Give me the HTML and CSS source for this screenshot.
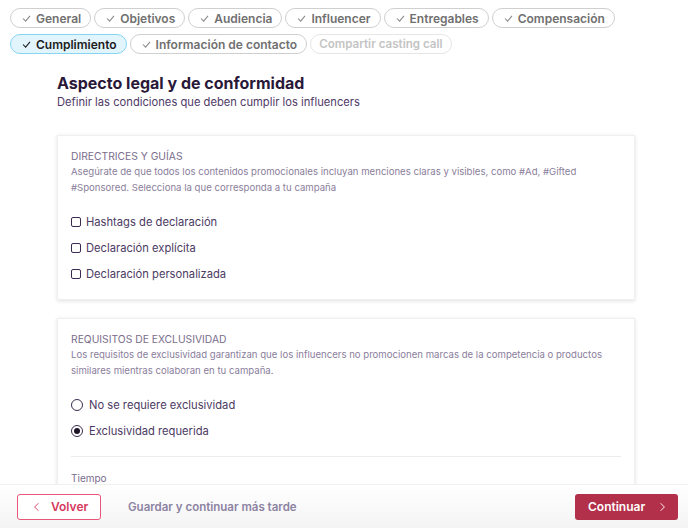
FILE: index.html
```html
<!DOCTYPE html>
<html lang="es">
<head>
  <meta charset="UTF-8">
  <title>Cumplimiento</title>
  <link rel="stylesheet" href="styles.css">
</head>
<body>
  <div class="page">
    <div class="steps">
      <span class="step"><svg viewBox="0 0 10 8"><path d="M1 4l3 3 5-6"/></svg>General</span>
      <span class="step"><svg viewBox="0 0 10 8"><path d="M1 4l3 3 5-6"/></svg>Objetivos</span>
      <span class="step"><svg viewBox="0 0 10 8"><path d="M1 4l3 3 5-6"/></svg>Audiencia</span>
      <span class="step"><svg viewBox="0 0 10 8"><path d="M1 4l3 3 5-6"/></svg>Influencer</span>
      <span class="step"><svg viewBox="0 0 10 8"><path d="M1 4l3 3 5-6"/></svg>Entregables</span>
      <span class="step"><svg viewBox="0 0 10 8"><path d="M1 4l3 3 5-6"/></svg>Compensación</span>
      <span class="step active"><svg viewBox="0 0 10 8"><path d="M1 4l3 3 5-6"/></svg>Cumplimiento</span>
      <span class="step"><svg viewBox="0 0 10 8"><path d="M1 4l3 3 5-6"/></svg>Información de contacto</span>
      <span class="step disabled">Compartir casting call</span>
    </div>

    <div class="content">
      <h1>Aspecto legal y de conformidad</h1>
      <p class="subtitle">Definir las condiciones que deben cumplir los influencers</p>

      <div class="card">
        <div class="card-title">DIRECTRICES Y GUÍAS</div>
        <p class="card-desc">Asegúrate de que todos los contenidos promocionales incluyan menciones claras y visibles, como #Ad, #Gifted<br>#Sponsored. Selecciona la que corresponda a tu campaña</p>
        <div class="options">
          <label class="option"><span class="box"></span>Hashtags de declaración</label>
          <label class="option"><span class="box"></span>Declaración explícita</label>
          <label class="option"><span class="box"></span>Declaración personalizada</label>
        </div>
      </div>

      <div class="card">
        <div class="card-title">REQUISITOS DE EXCLUSIVIDAD</div>
        <p class="card-desc">Los requisitos de exclusividad garantizan que los influencers no promocionen marcas de la competencia o productos<br>similares mientras colaboran en tu campaña.</p>
        <div class="options">
          <label class="option"><span class="radio"></span>No se requiere exclusividad</label>
          <label class="option"><span class="radio checked"></span>Exclusividad requerida</label>
        </div>
        <hr class="divider">
        <div class="field-label">Tiempo</div>
      </div>
    </div>
  </div>

  <div class="footer">
    <button class="back-btn"><svg viewBox="0 0 8 14"><path d="M7 1L1 7l6 6"/></svg>Volver</button>
    <button class="later-btn">Guardar y continuar más tarde</button>
    <button class="next-btn">Continuar<svg viewBox="0 0 8 14"><path d="M1 1l6 6-6 6"/></svg></button>
  </div>
</body>
</html>
```

FILE: styles.css
```css
* {
  box-sizing: border-box;
}

html, body {
  margin: 0;
  height: 100%;
}

body {
  font-family: Inter, 'Noto Sans', sans-serif;
  background: #fff;
  display: flex;
  flex-direction: column;
  overflow: hidden;
}

.page {
  flex: 1;
  overflow: hidden;
}

.steps {
  display: flex;
  flex-wrap: wrap;
  gap: 6px 3px;
  padding: 8px 10px 0 10px;
  width: 640px;
}

.step {
  display: inline-flex;
  align-items: center;
  gap: 5px;
  height: 20px;
  padding: 0 9px 0 11px;
  border: 1px solid #cfcfcf;
  border-radius: 10px;
  font-size: 12px;
  font-weight: 600;
  color: #707070;
  white-space: nowrap;
}

.step svg {
  width: 9px;
  height: 7px;
  fill: none;
  stroke: #8a8a8a;
  stroke-width: 1.2;
}

.step.active {
  background: #e2f5fc;
  border-color: #84d6f3;
  color: #1c1c1c;
}

.step.active svg {
  stroke: #1c1c1c;
}

.step.disabled {
  color: #c4c4c4;
  border-color: #e6e6e6;
  padding: 0 8px;
  font-size: 11.6px;
}

.content {
  padding: 0 53px 0 57px;
}

h1 {
  margin: 18px 0 0 0;
  font-size: 16px;
  font-weight: 700;
  color: #2a1839;
  line-height: 22px;
}

.subtitle {
  margin: 0;
  font-size: 11.2px;
  color: #4f3a68;
  line-height: 16px;
}

.card {
  background: #fff;
  border: 1px solid #efeff2;
  box-shadow: 0 1px 4px rgba(0,0,0,0.12);
  padding: 13px 13px 0 13px;
  margin-top: 25px;
}

.card + .card {
  margin-top: 18px;
}

.card-title {
  font-size: 10.3px;
  color: #7a6d8c;
  line-height: 14px;
  text-transform: uppercase;
}

.card-desc {
  margin: 1px 0 0 0;
  font-size: 9.6px;
  color: #8a7e9b;
  line-height: 16px;
}

.options {
  display: flex;
  flex-direction: column;
  gap: 10px;
  padding: 18px 0 17px 0;
}

.option {
  display: flex;
  align-items: center;
  gap: 5px;
  font-size: 11.2px;
  color: #4c3b63;
  line-height: 16px;
}

.box {
  width: 10px;
  height: 10px;
  border: 1px solid #3b2b4f;
  border-radius: 2px;
}

.radio {
  width: 12px;
  height: 12px;
  border: 1px solid #3b2b4f;
  border-radius: 50%;
  margin-right: 1px;
  position: relative;
}

.radio.checked::after {
  content: "";
  position: absolute;
  left: 2px;
  top: 2px;
  width: 6px;
  height: 6px;
  border-radius: 50%;
  background: #1e1428;
}

.divider {
  border: none;
  border-top: 1px solid #ececf0;
  margin: 0;
}

.field-label {
  font-size: 10px;
  color: #7a6d8c;
  padding-top: 15px;
  height: 40px;
}

.footer {
  height: 44px;
  flex-shrink: 0;
  display: flex;
  align-items: center;
  padding: 0 10px 0 17px;
  background: linear-gradient(to bottom, #ffffff, #f4f4f4);
  border-top: 1px solid #f0f0f0;
}

button {
  font-family: inherit;
  font-size: 12px;
  font-weight: 600;
  cursor: pointer;
}

.back-btn {
  display: inline-flex;
  align-items: center;
  gap: 12px;
  height: 26px;
  width: 84px;
  padding: 0 0 0 16px;
  border: 1px solid #e8577a;
  border-radius: 3px;
  background: #fff;
  color: #d6395e;
}

.back-btn svg {
  width: 5px;
  height: 10px;
  fill: none;
  stroke: #d6395e;
  stroke-width: 1.5;
}

.later-btn {
  background: none;
  border: none;
  margin-left: 27px;
  color: #8c82a2;
  font-size: 11.5px;
  padding: 0;
}

.next-btn {
  margin-left: auto;
  display: inline-flex;
  align-items: center;
  gap: 15px;
  height: 26px;
  width: 103px;
  padding: 0 0 0 13px;
  border: none;
  border-radius: 3px;
  background: #b3304a;
  color: #fff;
}

.next-btn svg {
  width: 5px;
  height: 10px;
  fill: none;
  stroke: #fff;
  stroke-width: 1.5;
}
```
